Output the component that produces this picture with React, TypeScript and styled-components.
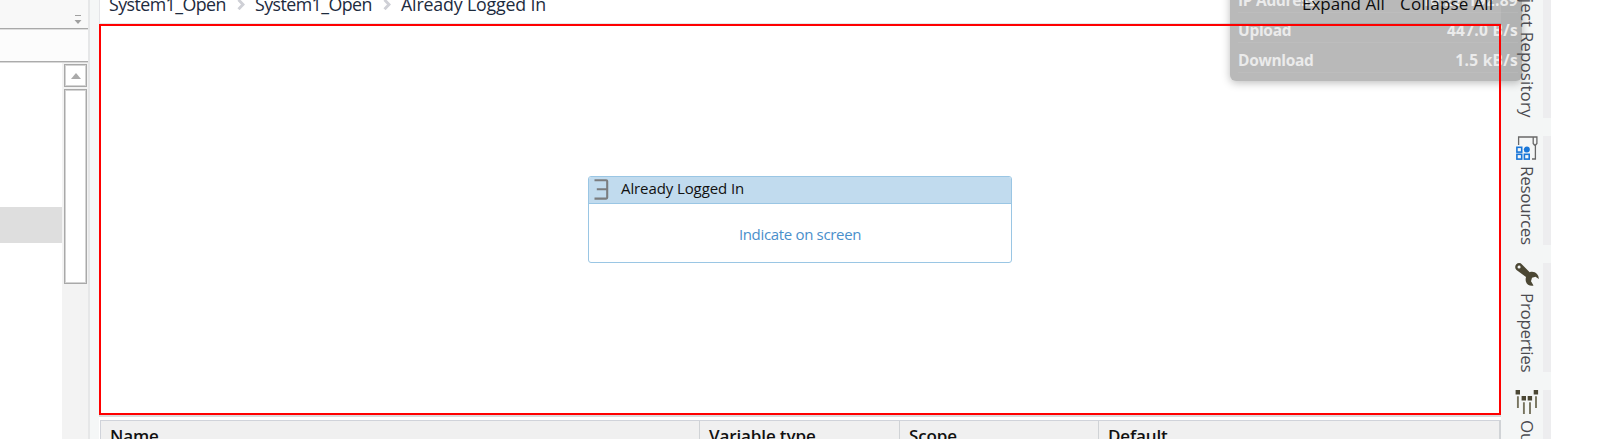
import React from "react";
import styled, { createGlobalStyle } from "styled-components";

const Global = createGlobalStyle`
  * { box-sizing: border-box; }
  body { margin: 0; background: #fff; font-family: "Open Sans", "Noto Sans", sans-serif; overflow: hidden; }
`;

const Window = styled.div`
  position: relative;
  display: flex;
  width: 1600px;
  height: 439px;
  overflow: hidden;
  background: #fff;
`;

/* left explorer panel */
const Explorer = styled.aside`
  display: flex;
  flex-direction: column;
  width: 90px;
  border-right: 2px solid #e6e7e8;
`;
const ExplorerToolbar = styled.div`
  display: flex;
  justify-content: flex-end;
  align-items: flex-start;
  height: 29px;
  padding: 15px 6px 0 0;
  background: #f8f8f8;
  border-bottom: 1px solid #a9a9a9;
`;
const ExplorerSearch = styled.div`
  height: 33px;
  background: #fcfcfc;
  border-top: 1px solid #dedede;
  border-bottom: 1px solid #ababab;
  box-shadow: 0 1px 0 #d9d9d9;
`;
const ExplorerBody = styled.div`
  display: flex;
  flex: 1;
  margin-top: 1px;
`;
const Tree = styled.div`
  flex: 1;
  padding-top: 144px;
`;
const SelectedRow = styled.div`
  height: 36px;
  background: #dedede;
`;
const ScrollTrack = styled.div`
  display: flex;
  flex-direction: column;
  gap: 2px;
  width: 26px;
  padding: 1px 1px 0 2px;
  background: #f3f3f3;
`;
const ScrollPart = styled.div<{ $h: number }>`
  display: flex;
  align-items: center;
  justify-content: center;
  height: ${(p) => p.$h}px;
  background: #fff;
  border: 1px solid #a9a9a9;
  box-shadow: inset 0 0 0 1px #d4d4d4;
`;

const Gutter = styled.div`
  width: 9px;
  background: #f5f7f7;
`;

/* designer */
const Designer = styled.main`
  display: flex;
  flex-direction: column;
  width: 1402px;
`;
const Header = styled.header`
  display: flex;
  justify-content: space-between;
  height: 24px;
  padding: 0 9px 0 9px;
  border-left: 1px solid #e4e5e8;
  border-bottom: 1px solid #e6e6e8;
`;
const Crumbs = styled.nav`
  display: flex;
  height: 24px;
  margin-top: -8px;
`;
const Crumb = styled.span<{ $w: number; $spacing: number }>`
  width: ${(p) => p.$w}px;
  font-size: 17.8px;
  line-height: 25px;
  letter-spacing: ${(p) => p.$spacing}px;
  white-space: nowrap;
  color: #1d2b3e;
`;
const Separator = styled.svg`
  width: 9px;
  height: 11px;
  margin: 7px 9px 0 11px;
`;
const Actions = styled.div`
  position: relative;
  z-index: 2;
  display: flex;
  gap: 16px;
  margin-top: -9px;
`;
const Action = styled.span<{ $w: number; $spacing?: number }>`
  width: ${(p) => p.$w}px;
  font-size: 17px;
  line-height: 26px;
  letter-spacing: ${(p) => p.$spacing ?? 0}px;
  white-space: nowrap;
  color: #0c0c0c;
`;
const Canvas = styled.section`
  position: relative;
  z-index: 2;
  display: flex;
  justify-content: center;
  align-items: flex-start;
  height: 391px;
  padding-top: 150px;
  border: 2px solid #ff0000;
`;
const Activity = styled.article`
  width: 424px;
  height: 87px;
  border: 1px solid #9ac6e4;
  border-radius: 3px;
  overflow: hidden;
  background: #fff;
`;
const ActivityHeader = styled.div`
  display: flex;
  align-items: center;
  gap: 12px;
  height: 27px;
  padding: 0 0 1px 5px;
  background: #c1dbee;
  border-bottom: 1px solid #9ac6e4;
`;
const ActivityTitle = styled.span`
  font-size: 15px;
  line-height: 24px;
  margin-top: -3px;
  letter-spacing: -0.1px;
  white-space: nowrap;
  color: #111;
`;
const IndicateLink = styled.div`
  height: 58px;
  padding-top: 18px;
  text-align: center;
  font-size: 15px;
  line-height: 24px;
  letter-spacing: -0.33px;
  color: #4a8fcb;
`;
const SplitLine = styled.div`
  height: 5px;
  border-top: 2px solid #dcdcdd;
`;
const Columns = styled.div`
  display: flex;
  height: 19px;
  margin-left: 1px;
  background: #f0f0f0;
  border-top: 1px solid #d0d3da;
  border-left: 1px solid #d0d3da;
  border-right: 2px solid #d0d3d6;
  overflow: hidden;
`;
const Column = styled.div<{ $w: number; $last?: boolean }>`
  flex: none;
  width: ${(p) => p.$w}px;
  padding: 3px 0 0 9px;
  border-right: ${(p) => (p.$last ? "none" : "1px solid #d0d3d6")};
  font-size: 17px;
  font-weight: 600;
  line-height: 24px;
  letter-spacing: -0.12px;
  white-space: nowrap;
  color: #111;
`;

/* docked tabs */
const Dock = styled.aside`
  display: flex;
  flex-direction: column;
  gap: 18px;
  width: 50px;
  background: #f4f6f6;
`;
const DockTab = styled.div<{ $h: number; $end?: boolean }>`
  position: relative;
  z-index: 2;
  flex: none;
  display: flex;
  flex-direction: column;
  align-items: center;
  justify-content: ${(p) => (p.$end ? "flex-end" : "flex-start")};
  height: ${(p) => p.$h}px;
  padding-left: 10px;
  border-right: 8px solid #ededef;
  svg { flex: none; }
`;
const DockLabel = styled.span<{ $spacing?: number }>`
  flex: none;
  writing-mode: vertical-rl;
  font-size: 17px;
  line-height: 24px;
  letter-spacing: ${(p) => p.$spacing ?? -0.3}px;
  margin-top: 6px;
  white-space: nowrap;
  color: #4b4b50;
`;

/* network widget floating above the window */
const NetWidget = styled.div`
  position: absolute;
  z-index: 1;
  left: 1230px;
  top: -20px;
  width: 292px;
  height: 101px;
  padding: 3px 4px 0 8px;
  border-radius: 0 0 6px 6px;
  background: rgba(0, 0, 0, 0.275);
  box-shadow: 0 2px 8px rgba(0, 0, 0, 0.26);
`;
const NetRow = styled.div`
  display: flex;
  justify-content: space-between;
  height: 30px;
  border-bottom: 1px solid rgba(255, 255, 255, 0.07);
  font-size: 15.5px;
  font-weight: 700;
  line-height: 35px;
  color: #ebebeb;
`;
const NetName = styled.span`
  letter-spacing: -0.3px;
`;
const NetValue = styled.span`
  letter-spacing: 0.3px;
`;

const Chevron = () => (
  <Separator viewBox="0 0 9 11">
    <path d="M1.5 0.8 L6 5.5 L1.5 10.2" fill="none" stroke="#cfd0d6" strokeWidth="2.9" />
  </Separator>
);

const SequenceIcon = () => (
  <svg width="15" height="21" viewBox="0 0 15 21">
    <path d="M0.5 1.2H12.2Q13.2 1.2 13.2 2.2V18.6Q13.2 19.6 12.2 19.6H0.5M2.8 10.3H13" fill="none" stroke="#7b7d7f" strokeWidth="2.1" />
  </svg>
);

const ResourcesIcon = () => (
  <svg width="22" height="24" viewBox="0 0 22 24">
    <path d="M2.6 9V1H20.9V7.5L19.6 9H18.4L17.2 7.5V1M19.4 9V23H16" fill="none" stroke="#686868" strokeWidth="1.3" />
    <g fill="none" stroke="#1976d8" strokeWidth="1.6">
      <rect x="0.9" y="11.3" width="4.8" height="4.8" />
      <rect x="0.9" y="18.3" width="4.8" height="4.8" />
      <rect x="8.4" y="18.3" width="4.8" height="4.8" />
    </g>
    <circle cx="10.8" cy="13.6" r="3" fill="#1976d8" />
  </svg>
);

const WrenchIcon = () => (
  <svg width="24" height="24" viewBox="0 0 24 24">
    <path
      d="M1.3 1.3A3.9 3.9 0 0 1 7 1.4L14.7 9.3C17 8.3 20 8.8 22 11Q24 13.2 23.8 16L20.5 13.8L17 14.7L16 18.3L18.5 22.6C15.5 23.5 11.5 21.8 10.8 18.2Q10.4 16.2 11 14.1L1.5 7A4 4 0 0 1 1.3 1.3ZM4 2.6A1.5 1.5 0 1 0 4.1 5.6A1.5 1.5 0 1 0 4 2.6Z"
      fill="#4b4734"
      fillRule="evenodd"
    />
  </svg>
);

const OutlineIcon = () => (
  <svg width="24" height="24" viewBox="0 0 24 24">
    <path d="M0.6 0h4.4v4.4h-4.4zM18.7 0h4.4v4.4h-4.4zM6.6 6h4.4v4.4h-4.4zM12.7 6h4.4v4.4h-4.4z" fill="#4b4734" />
    <path d="M2.9 6.2v11.8M21 6.2v11.8M8.9 12.2v11.8M15 12.2v11.8" stroke="#77745f" strokeWidth="1.9" />
  </svg>
);

export default function App() {
  return (
    <Window>
      <Global />
      <Explorer>
        <ExplorerToolbar>
          <svg width="8" height="10" viewBox="0 0 8 10">
            <path d="M1 0h6v1H1zM0.5 5h7L4 9z" fill="#a0a0a0" />
          </svg>
        </ExplorerToolbar>
        <ExplorerSearch />
        <ExplorerBody>
          <Tree>
            <SelectedRow />
          </Tree>
          <ScrollTrack>
            <ScrollPart $h={23}>
              <svg width="10" height="6" viewBox="0 0 10 6">
                <path d="M0 6L5 0L10 6Z" fill="#aaa" />
              </svg>
            </ScrollPart>
            <ScrollPart $h={195} />
          </ScrollTrack>
        </ExplorerBody>
      </Explorer>
      <Gutter />
      <Designer>
        <Header>
          <Crumbs>
            <Crumb $w={117} $spacing={-0.55}>System1_Open</Crumb>
            <Chevron />
            <Crumb $w={117} $spacing={-0.55}>System1_Open</Crumb>
            <Chevron />
            <Crumb $w={146} $spacing={-0.17}>Already Logged In</Crumb>
          </Crumbs>
          <Actions>
            <Action $w={82}>Expand All</Action>
            <Action $w={92} $spacing={0.2}>Collapse All</Action>
          </Actions>
        </Header>
        <Canvas>
          <Activity>
            <ActivityHeader>
              <SequenceIcon />
              <ActivityTitle>Already Logged In</ActivityTitle>
            </ActivityHeader>
            <IndicateLink>Indicate on screen</IndicateLink>
          </Activity>
        </Canvas>
        <SplitLine />
        <Columns>
          <Column $w={599}>Name</Column>
          <Column $w={200}>Variable type</Column>
          <Column $w={199}>Scope</Column>
          <Column $w={399} $last>Default</Column>
        </Columns>
      </Designer>
      <Dock>
        <DockTab $h={118} $end>
          <DockLabel $spacing={0.1}>Object Repository</DockLabel>
        </DockTab>
        <DockTab $h={109}>
          <ResourcesIcon />
          <DockLabel>Resources</DockLabel>
        </DockTab>
        <DockTab $h={109}>
          <WrenchIcon />
          <DockLabel>Properties</DockLabel>
        </DockTab>
        <DockTab $h={110}>
          <OutlineIcon />
          <DockLabel>Outline</DockLabel>
        </DockTab>
      </Dock>
      <NetWidget>
        <NetRow><NetName>IP Address</NetName><NetValue>10.22.192.89</NetValue></NetRow>
        <NetRow><NetName>Upload</NetName><NetValue>447.0 B/s</NetValue></NetRow>
        <NetRow><NetName>Download</NetName><NetValue>1.5 kB/s</NetValue></NetRow>
      </NetWidget>
    </Window>
  );
}
